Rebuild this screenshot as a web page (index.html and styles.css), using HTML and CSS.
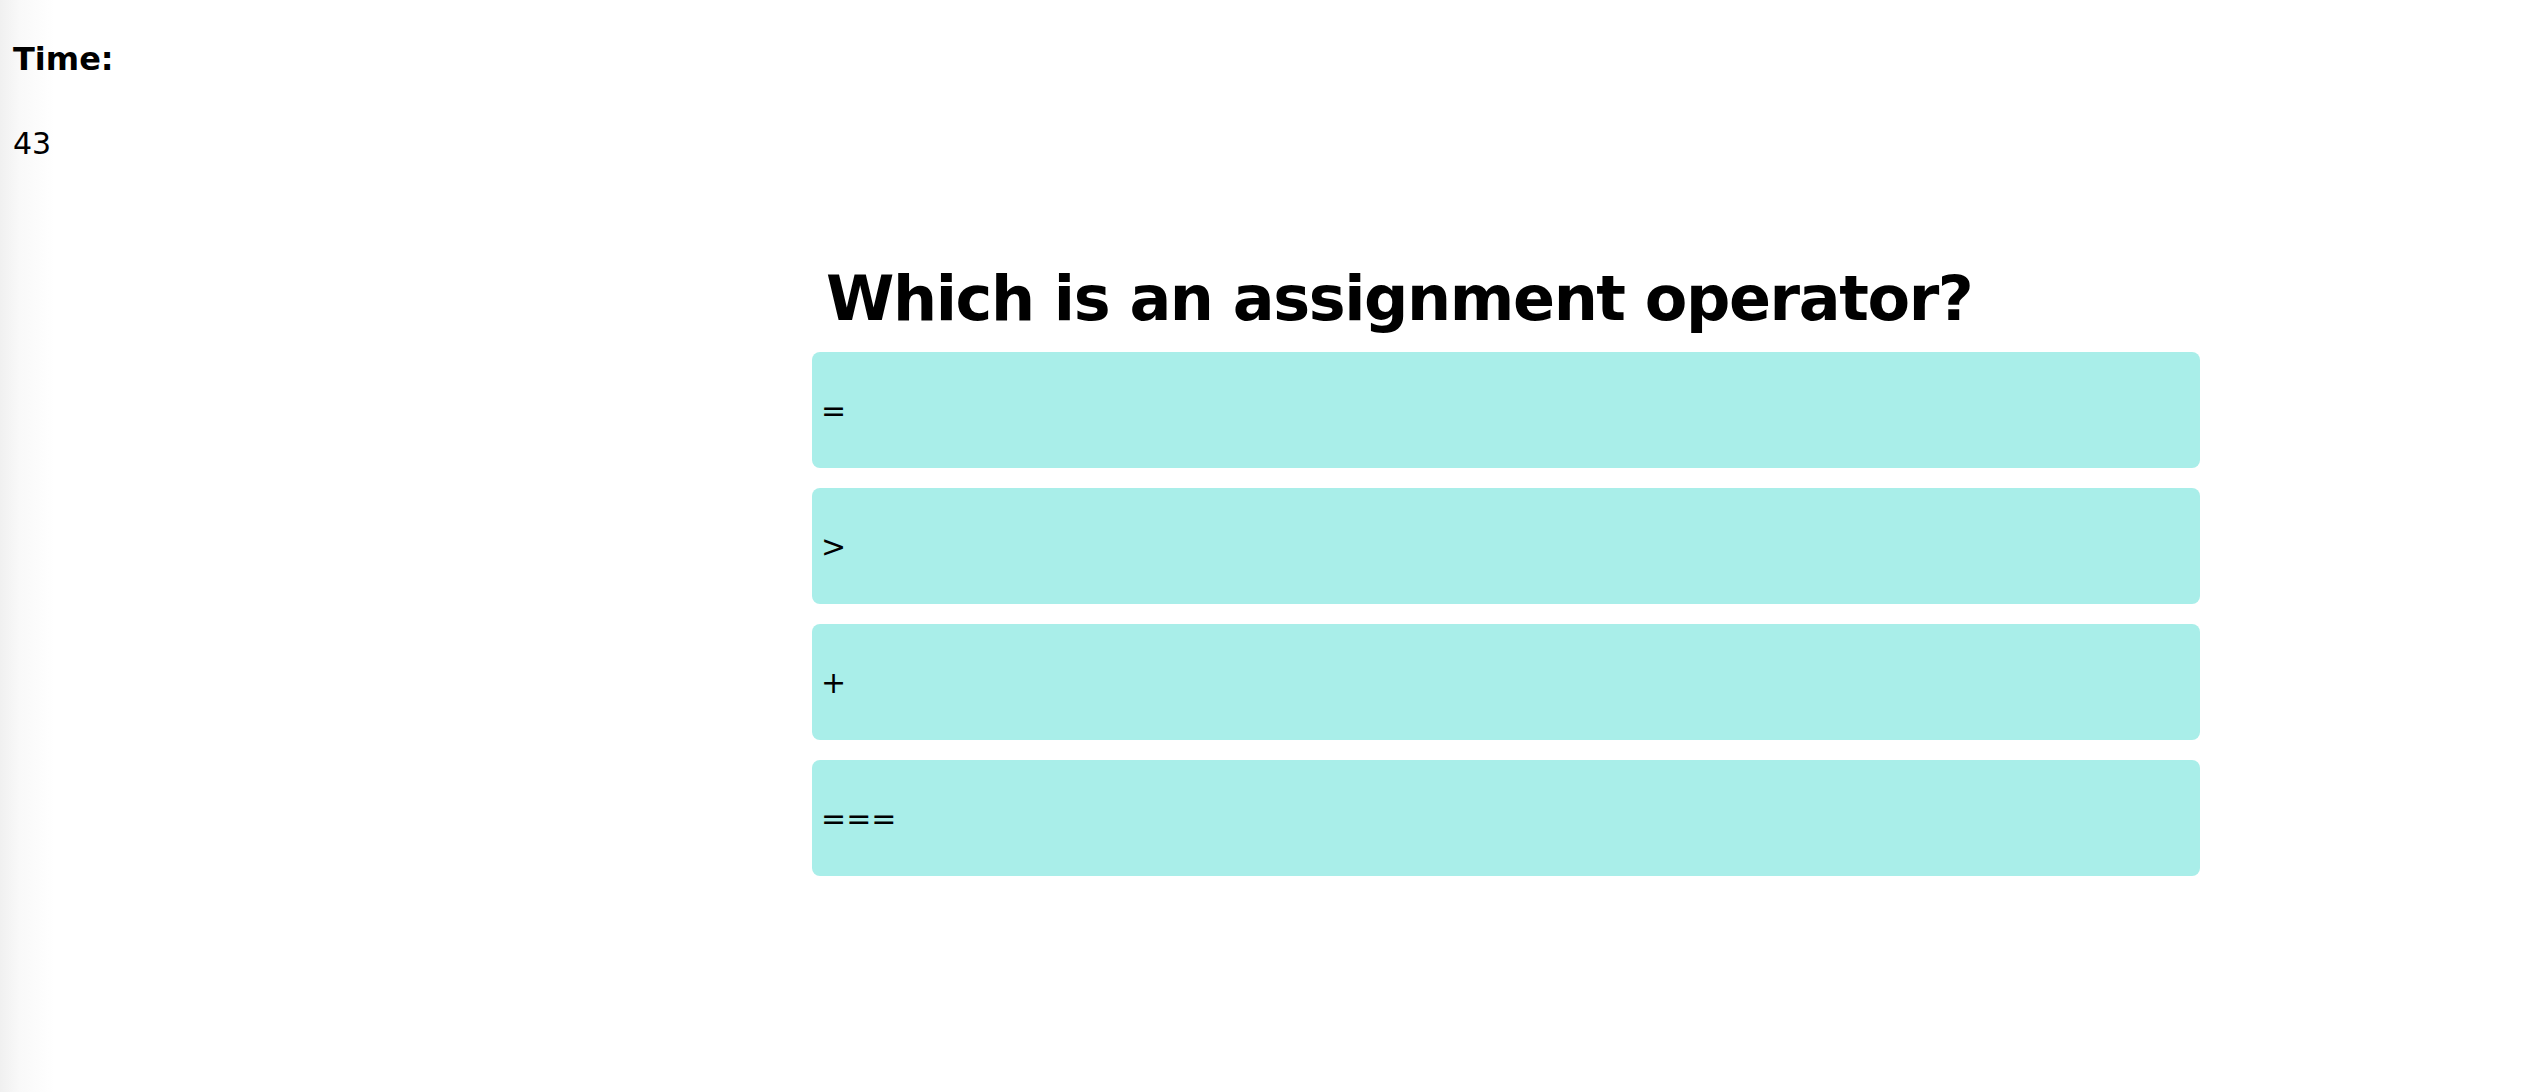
FILE: index.html
```html
<!DOCTYPE html>
<html lang="en">
<head>
    <meta charset="UTF-8">
    <meta name="viewport" content="width=device-width, initial-scale=1.0">
    <title>Quiz</title>
    <link rel="stylesheet" href="styles.css">
</head>
<body>
    <div class="timer">
        <p class="timer-label">Time:</p>
        <p class="timer-value">43</p>
    </div>

    <div class="quiz">
        <h1 class="question">Which is an assignment operator?</h1>
        <div class="answers">
            <div class="answer">=</div>
            <div class="answer">&gt;</div>
            <div class="answer">+</div>
            <div class="answer">===</div>
        </div>
    </div>
</body>
</html>
```

FILE: styles.css
```css
body {
    font-family: "DejaVu Sans", Verdana, sans-serif;
    font-size: 30px;
    color: #000;
    margin: 0;
    min-height: 1092px;
    background: linear-gradient(to right, #f0f0f0 0, #f9f9f9 20px, #fff 55px);
}

.timer {
    padding: 41px 0 0 13px;
}

.timer-label {
    margin: 0;
    font-size: 32px;
    font-weight: bold;
    line-height: 37px;
}

.timer-value {
    margin: 48px 0 0;
    line-height: 35px;
}

.quiz {
    margin-left: 812px;
    width: 1388px;
}

.question {
    margin: 102px 0 17px;
    padding-left: 14px;
    font-size: 62px;
    line-height: 72px;
    letter-spacing: -1.4px;
}

.answers {
    display: flex;
    flex-direction: column;
    gap: 20px;
}

.answer {
    height: 116px;
    padding: 0 9px;
    display: flex;
    align-items: center;
    background-color: #a9eee9;
    border-radius: 8px;
    cursor: pointer;
}
```
